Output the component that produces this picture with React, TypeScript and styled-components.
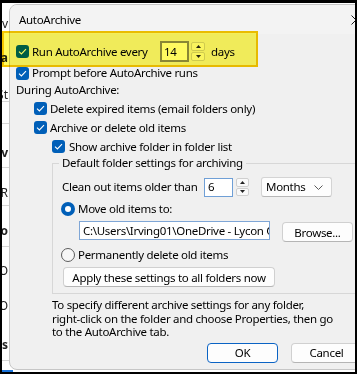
import React from "react";
import styled, { createGlobalStyle, css } from "styled-components";

const Global = createGlobalStyle`
  html, body { margin: 0; padding: 0; background: #000; }
  body { font-family: "Noto Sans", "Segoe UI", sans-serif; }
`;

const Frame = styled.div`
  position: relative;
  width: 357px;
  height: 374px;
  box-sizing: border-box;
  padding: 3px 2px 2px 2px;
  background: #000;
  overflow: hidden;
`;

const Screen = styled.div`
  display: flex;
  flex-direction: column;
  height: 100%;
  background: #fff;
  overflow: hidden;
`;

const Main = styled.div`
  display: flex;
  flex: 1;
  min-height: 0;
`;

const BottomBar = styled.div`
  height: 2px;
  display: flex;
  flex-shrink: 0;
`;

const TaskSeg = styled.div`
  width: 11px;
  background: #1a73d9;
`;

const Strip = styled.div`
  width: 7px;
  flex-shrink: 0;
  display: flex;
  flex-direction: column;
`;

const StripText = styled.div<{ $mt: number; $bold?: boolean }>`
  margin-top: ${(p) => p.$mt}px;
  height: 12px;
  line-height: 12px;
  font-size: 12px;
  font-weight: ${(p) => (p.$bold ? 700 : 400)};
  display: flex;
  justify-content: flex-end;
  overflow: hidden;
  white-space: nowrap;
  color: #222;
  padding-right: 1px;
  flex-shrink: 0;
`;

const StripLine = styled.div<{ $mt: number }>`
  margin-top: ${(p) => p.$mt}px;
  height: 1px;
  background: #d6d6d6;
  flex-shrink: 0;
`;

const Dialog = styled.div`
  margin-top: 1px;
  width: 371px;
  height: 366px;
  flex-shrink: 0;
  box-sizing: border-box;
  border: 1px solid #c6c6c6;
  border-radius: 8px;
  background: #f0f0f0;
  display: flex;
  flex-direction: column;
  overflow: hidden;
  font-size: 11.5px;
  letter-spacing: -0.3px;
  color: #000;
`;

const TitleBar = styled.div`
  height: 29px;
  flex-shrink: 0;
  display: flex;
  align-items: center;
  padding-left: 9px;
  background: #f3f3f3;
`;

const Title = styled.span`
  line-height: 14px;
  padding-top: 1px;
`;

const CloseBtn = styled.div`
  margin-left: auto;
  width: 46px;
  height: 29px;
  display: flex;
  align-items: center;
  justify-content: center;
`;

const Body = styled.div`
  display: flex;
  flex-direction: column;
  padding: 7px 0 0 6px;
`;

const Row = styled.div<{ $h: number; $mt?: number; $ml?: number }>`
  display: flex;
  align-items: center;
  height: ${(p) => p.$h}px;
  margin-top: ${(p) => p.$mt ?? 0}px;
  margin-left: ${(p) => p.$ml ?? 0}px;
  white-space: nowrap;
  line-height: 14px;
`;

const Label = styled.span<{ $ml?: number; $w?: number }>`
  margin-left: ${(p) => p.$ml ?? 0}px;
  ${(p) => (p.$w ? `width: ${p.$w}px;` : "")}
  flex-shrink: 0;
`;

const CheckBox = styled.span`
  width: 13px;
  height: 13px;
  border-radius: 3px;
  background: #005fb8;
  display: inline-flex;
  align-items: center;
  justify-content: center;
  flex-shrink: 0;
`;

const Radio = styled.span<{ $on?: boolean }>`
  width: 14px;
  height: 14px;
  border-radius: 50%;
  box-sizing: border-box;
  flex-shrink: 0;
  display: inline-flex;
  align-items: center;
  justify-content: center;
  ${(p) =>
    p.$on
      ? css`
          background: #005fb8;
          &::after {
            content: "";
            width: 6px;
            height: 6px;
            border-radius: 50%;
            background: #fff;
          }
        `
      : css`
          border: 1px solid #5c5c5c;
          background: #f7f7f7;
        `}
`;

const TextBox = styled.div<{ $w: number; $h: number; $border: string; $ml?: number; $thick?: boolean }>`
  width: ${(p) => p.$w}px;
  height: ${(p) => p.$h}px;
  margin-left: ${(p) => p.$ml ?? 0}px;
  box-sizing: border-box;
  background: #fff;
  border: ${(p) => (p.$thick ? 2 : 1)}px solid ${(p) => p.$border};
  display: flex;
  align-items: center;
  padding-left: ${(p) => (p.$thick ? 2 : 3)}px;
  overflow: hidden;
  white-space: nowrap;
  flex-shrink: 0;
`;

const Spinner = styled.div<{ $ml: number; $h: number; $w: number }>`
  margin-left: ${(p) => p.$ml}px;
  width: ${(p) => p.$w}px;
  height: ${(p) => p.$h}px;
  display: flex;
  flex-direction: column;
  gap: 1px;
  flex-shrink: 0;
`;

const SpinBtn = styled.div`
  flex: 1;
  box-sizing: border-box;
  border: 1px solid #cfcfcf;
  border-radius: 2px;
  background: #f9f9f9;
  display: flex;
  align-items: center;
  justify-content: center;
`;

const Combo = styled.div`
  margin-left: 12px;
  width: 71px;
  height: 20px;
  box-sizing: border-box;
  border: 1px solid #d4d4d4;
  border-bottom-color: #b8b8b8;
  border-radius: 3px;
  background: #fdfdfd;
  display: flex;
  align-items: center;
  padding: 0 8px 0 4px;
  flex-shrink: 0;
`;

const ComboText = styled.span`
  flex: 1;
`;

const Button = styled.div<{ $w: number; $default?: boolean; $ml?: number; $mt?: number }>`
  width: ${(p) => p.$w}px;
  height: 20px;
  margin-left: ${(p) => p.$ml ?? 0}px;
  margin-top: ${(p) => p.$mt ?? 0}px;
  box-sizing: border-box;
  border: 1px solid ${(p) => (p.$default ? "#0a63c4" : "#d0d0d0")};
  border-bottom-color: ${(p) => (p.$default ? "#0a63c4" : "#b5b5b5")};
  border-radius: 4px;
  background: #fdfdfd;
  display: flex;
  align-items: center;
  justify-content: center;
  white-space: nowrap;
  flex-shrink: 0;
`;

const Group = styled.div`
  position: relative;
  margin: 7px 0 0 36px;
  width: 313px;
  box-sizing: border-box;
  border: 1px solid #d7d7d7;
  padding: 13px 0 6px 9px;
  display: flex;
  flex-direction: column;
`;

const Legend = styled.span`
  position: absolute;
  left: 6px;
  top: -8px;
  padding: 0 3px;
  background: #f0f0f0;
  line-height: 14px;
  white-space: nowrap;
`;

const PathRow = styled.div`
  display: flex;
  align-items: flex-start;
  margin-top: 6px;
  margin-left: 17px;
  white-space: nowrap;
`;

const Paragraph = styled.p`
  margin: 4px 0 0 36px;
  line-height: 13.5px;
  white-space: nowrap;
`;

const Footer = styled.div`
  display: flex;
  margin: 4px 0 0 191px;
  gap: 13px;
`;

const Highlight = styled.div`
  position: absolute;
  left: 2px;
  top: 31px;
  width: 256px;
  height: 36px;
  box-sizing: border-box;
  border: 2px solid #f6c600;
  background: rgb(255, 250, 96);
  mix-blend-mode: multiply;
  pointer-events: none;
`;

const Check = () => (
  <CheckBox>
    <svg width="9" height="7" viewBox="0 0 9 7">
      <path d="M1 3.6 L3.4 5.9 L8 1.2" stroke="#fff" strokeWidth="1.1" fill="none" />
    </svg>
  </CheckBox>
);

const Up = () => (
  <svg width="5" height="3" viewBox="0 0 5 3">
    <path d="M0 3 L2.5 0 L5 3 Z" fill="#222" />
  </svg>
);
const Down = () => (
  <svg width="5" height="3" viewBox="0 0 5 3">
    <path d="M0 0 L2.5 3 L5 0 Z" fill="#222" />
  </svg>
);

const SpinBox = ({ ml, h, w }: { ml: number; h: number; w: number }) => (
  <Spinner $ml={ml} $h={h} $w={w}>
    <SpinBtn>
      <Up />
    </SpinBtn>
    <SpinBtn>
      <Down />
    </SpinBtn>
  </Spinner>
);

type StripItem = { mt: number; kind: "text" | "line"; text?: string; bold?: boolean };
const stripItems: StripItem[] = [
  { mt: 15, kind: "text", text: "Nav" },
  { mt: 22, kind: "text", text: "Data", bold: true },
  { mt: 25, kind: "text", text: "St" },
  { mt: 0, kind: "line" },
  { mt: 21, kind: "line" },
  { mt: 23, kind: "text", text: "v", bold: true },
  { mt: 8, kind: "line" },
  { mt: 19, kind: "text", text: "R" },
  { mt: 6, kind: "line" },
  { mt: 19, kind: "text", text: "Pro", bold: true },
  { mt: 9, kind: "line" },
  { mt: 18, kind: "text", text: "O" },
  { mt: 23, kind: "text", text: "O" },
  { mt: 27, kind: "text", text: "Is", bold: true },
  { mt: 9, kind: "line" },
];

export default function App() {
  return (
    <>
      <Global />
      <Frame>
        <Screen>
          <Main>
            <Strip>
              {stripItems.map((it, i) =>
                it.kind === "line" ? (
                  <StripLine key={i} $mt={it.mt} />
                ) : (
                  <StripText key={i} $mt={it.mt} $bold={it.bold}>
                    {it.text}
                  </StripText>
                )
              )}
            </Strip>
            <Dialog>
              <TitleBar>
                <Title>AutoArchive</Title>
                <CloseBtn>
                  <svg width="10" height="10" viewBox="0 0 10 10">
                    <path d="M0.5 0.5 L9.5 9.5 M9.5 0.5 L0.5 9.5" stroke="#1a1a1a" strokeWidth="1" />
                  </svg>
                </CloseBtn>
              </TitleBar>
              <Body>
                <Row $h={21}>
                  <Check />
                  <Label $ml={3} $w={128}>
                    Run AutoArchive every
                  </Label>
                  <TextBox $w={29} $h={21} $border="#8a8a8a" $thick>
                    14
                  </TextBox>
                  <SpinBox ml={2} h={19} w={14} />
                  <Label $ml={6}>days</Label>
                </Row>
                <Row $h={14} $mt={4}>
                  <Check />
                  <Label $ml={3}>Prompt before AutoArchive runs</Label>
                </Row>
                <Row $h={14} $mt={3}>
                  During AutoArchive:
                </Row>
                <Row $h={19} $mt={2} $ml={18}>
                  <Check />
                  <Label $ml={3}>Delete expired items (email folders only)</Label>
                </Row>
                <Row $h={19} $ml={18}>
                  <Check />
                  <Label $ml={3}>Archive or delete old items</Label>
                </Row>
                <Row $h={19} $ml={36}>
                  <Check />
                  <Label $ml={4}>Show archive folder in folder list</Label>
                </Row>
                <Group>
                  <Legend>Default folder settings for archiving</Legend>
                  <Row $h={20}>
                    <Label $w={142}>Clean out items older than</Label>
                    <TextBox $w={29} $h={19} $border="#6f9fd6">
                      6
                    </TextBox>
                    <SpinBox ml={3} h={18} w={13} />
                    <Combo>
                      <ComboText>Months</ComboText>
                      <svg width="9" height="5" viewBox="0 0 9 5">
                        <path d="M0.5 0.5 L4.5 4.5 L8.5 0.5" stroke="#5a5a5a" strokeWidth="1" fill="none" />
                      </svg>
                    </Combo>
                  </Row>
                  <Row $h={13} $mt={5} $ml={-1}>
                    <Radio $on />
                    <Label $ml={3}>Move old items to:</Label>
                  </Row>
                  <PathRow>
                    <TextBox $w={191} $h={19} $border="#7fa6d6">
                      C:\Users\Irving01\OneDrive - Lycon Corporation\Documents
                    </TextBox>
                    <Button $w={71} $ml={12} $mt={1}>
                      Browse...
                    </Button>
                  </PathRow>
                  <Row $h={13} $mt={6} $ml={-1}>
                    <Radio />
                    <Label $ml={3}>Permanently delete old items</Label>
                  </Row>
                  <Button $w={212} $ml={1} $mt={6}>
                    Apply these settings to all folders now
                  </Button>
                </Group>
                <Paragraph>
                  To specify different archive settings for any folder,
                  <br />
                  right-click on the folder and choose Properties, then go
                  <br />
                  to the AutoArchive tab.
                </Paragraph>
                <Footer>
                  <Button $w={71} $default>
                    OK
                  </Button>
                  <Button $w={71}>Cancel</Button>
                </Footer>
              </Body>
            </Dialog>
          </Main>
          <BottomBar>
            <TaskSeg />
          </BottomBar>
        </Screen>
        <Highlight />
      </Frame>
    </>
  );
}
